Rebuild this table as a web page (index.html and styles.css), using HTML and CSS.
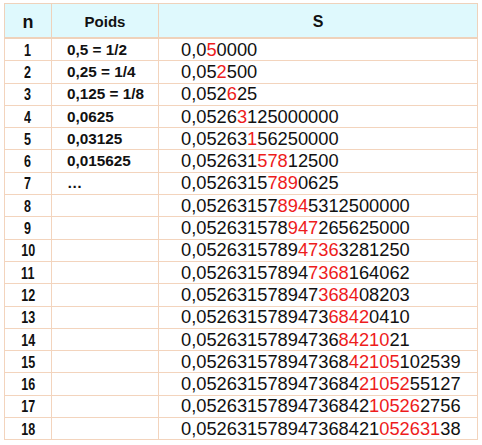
FILE: index.html
```html
<!DOCTYPE html>
<html>
<head>
<meta charset="utf-8">
<link rel="stylesheet" href="styles.css">
</head>
<body>
<table class="tbl">
  <colgroup><col class="c-n"><col class="c-p"><col class="c-s"></colgroup>
  <thead>
    <tr><th>n</th><th>Poids</th><th>S</th></tr>
  </thead>
  <tbody>
    <tr><td class="n"><span>1</span></td><td class="p">0,5 = 1/2</td><td class="s">0,0<em>5</em>0000</td></tr>
    <tr><td class="n"><span>2</span></td><td class="p">0,25 = 1/4</td><td class="s">0,05<em>2</em>500</td></tr>
    <tr><td class="n"><span>3</span></td><td class="p">0,125 = 1/8</td><td class="s">0,052<em>6</em>25</td></tr>
    <tr><td class="n"><span>4</span></td><td class="p">0,0625</td><td class="s">0,0526<em>3</em>125000000</td></tr>
    <tr><td class="n"><span>5</span></td><td class="p">0,03125</td><td class="s">0,05263<em>1</em>56250000</td></tr>
    <tr><td class="n"><span>6</span></td><td class="p">0,015625</td><td class="s">0,052631<em>578</em>12500</td></tr>
    <tr><td class="n"><span>7</span></td><td class="p">…</td><td class="s">0,0526315<em>789</em>0625</td></tr>
    <tr><td class="n"><span>8</span></td><td class="p"></td><td class="s">0,05263157<em>894</em>5312500000</td></tr>
    <tr><td class="n"><span>9</span></td><td class="p"></td><td class="s">0,052631578<em>947</em>265625000</td></tr>
    <tr><td class="n"><span>10</span></td><td class="p"></td><td class="s">0,0526315789<em>4736</em>3281250</td></tr>
    <tr><td class="n"><span>11</span></td><td class="p"></td><td class="s">0,05263157894<em>7368</em>164062</td></tr>
    <tr><td class="n"><span>12</span></td><td class="p"></td><td class="s">0,052631578947<em>3684</em>08203</td></tr>
    <tr><td class="n"><span>13</span></td><td class="p"></td><td class="s">0,0526315789473<em>6842</em>0410</td></tr>
    <tr><td class="n"><span>14</span></td><td class="p"></td><td class="s">0,05263157894736<em>84210</em>21</td></tr>
    <tr><td class="n"><span>15</span></td><td class="p"></td><td class="s">0,052631578947368<em>42105</em>102539</td></tr>
    <tr><td class="n"><span>16</span></td><td class="p"></td><td class="s">0,0526315789473684<em>21052</em>55127</td></tr>
    <tr><td class="n"><span>17</span></td><td class="p"></td><td class="s">0,05263157894736842<em>10526</em>2756</td></tr>
    <tr><td class="n"><span>18</span></td><td class="p"></td><td class="s">0,052631578947368421<em>052631</em>38</td></tr>
  </tbody>
</table>
</body>
</html>
```
FILE: styles.css
```css
html, body {
  margin: 0;
  padding: 0;
  background: #ffffff;
}
body {
  padding: 3px 0 0 4px;
  font-family: "Liberation Sans", Arial, sans-serif;
  color: #111111;
}
.tbl {
  border-collapse: collapse;
  table-layout: fixed;
  width: 473px;
  border: 1px solid #efd2bb;
}
.c-n { width: 47px; }
.c-p { width: 107px; }
.c-s { width: 319px; }
.tbl th {
  height: 31px;
  padding: 2px 0 0 0;
  line-height: 18px;
  background: #dff9fd;
  font-weight: bold;
  font-size: 15px;
  text-align: center;
  border: 1px solid #efd2bb;
  border-bottom: 2px solid #efd2bb;
}
.tbl th:first-child { font-size: 18px; }
.tbl th:last-child { font-size: 16px; }
.tbl td {
  height: 21.3px;
  padding: 0;
  line-height: 18px;
  border: 1px solid #f3d4bd;
  vertical-align: middle;
  white-space: nowrap;
}
.n {
  text-align: center;
  font-weight: bold;
  font-size: 16.5px;
}
.n span {
  display: inline-block;
  transform: scaleX(0.76);
}
.p {
  padding-left: 15px !important;
  font-weight: bold;
  font-size: 15.3px;
}
.s {
  padding-left: 22px !important;
  font-size: 18.3px;
}
.s em {
  font-style: normal;
  color: #ee1c1c;
}
```
